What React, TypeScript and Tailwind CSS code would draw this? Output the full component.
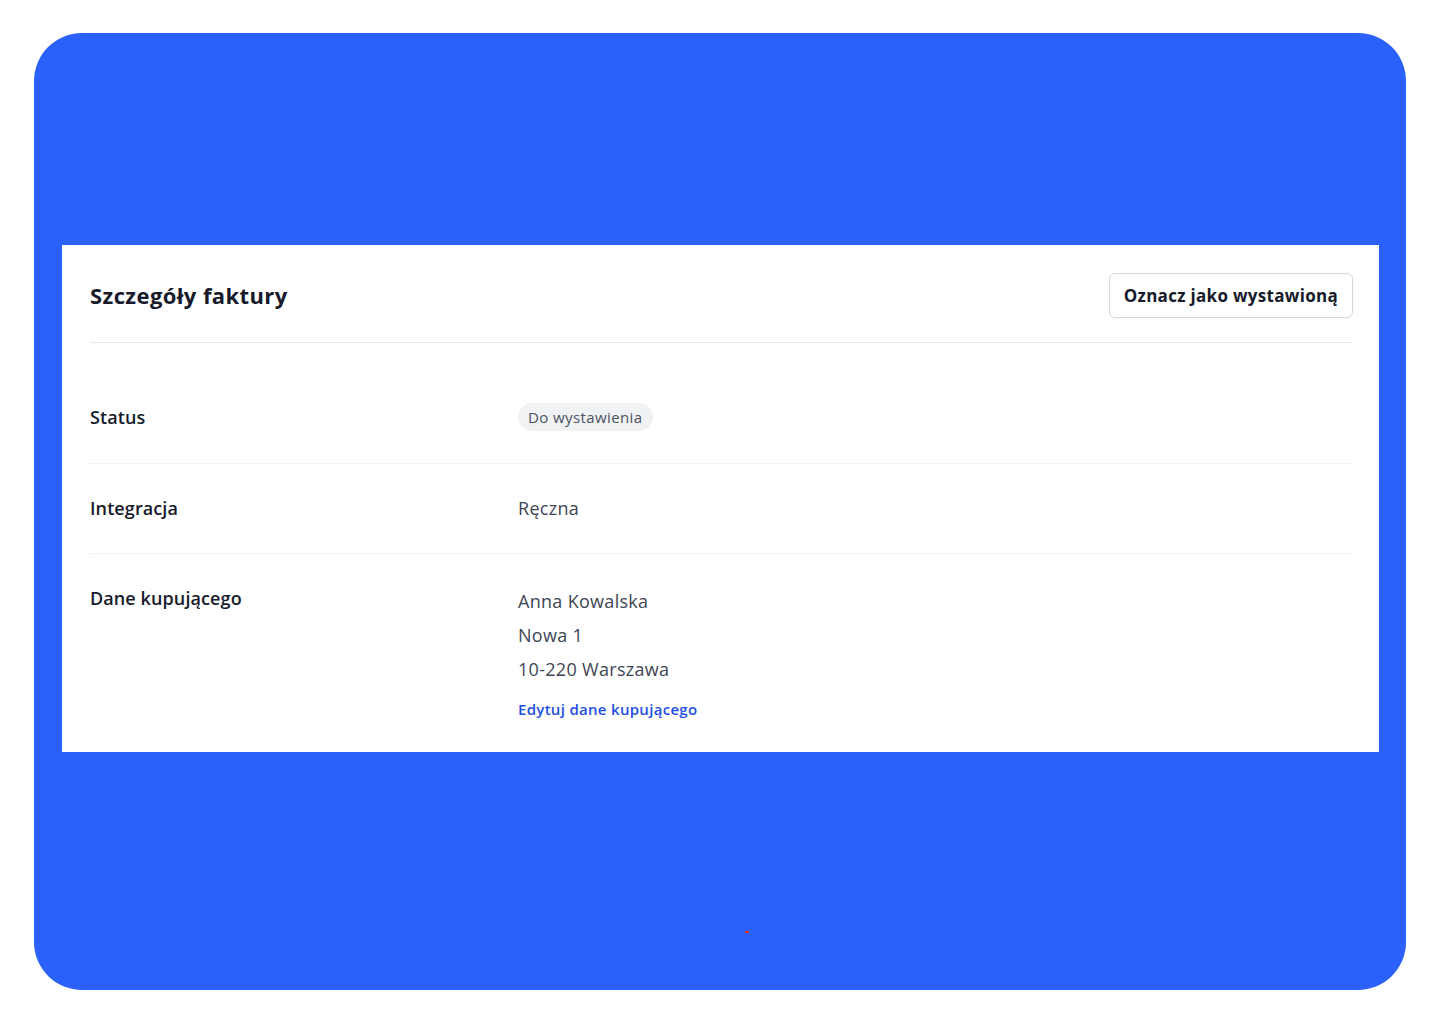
import React from 'react';

const rows = [
  { label: 'Status', kind: 'badge' },
  { label: 'Integracja', kind: 'text' },
  { label: 'Dane kupującego', kind: 'buyer' },
];

const App: React.FC = () => {
  return (
    <div className="w-[1440px] h-[1024px] bg-white pt-[33px] pl-[34px]" style={{ fontFamily: '"Open Sans", "Noto Sans", sans-serif' }}>
      <div className="relative w-[1372px] h-[957px] rounded-[48px] bg-[#2961FA] pt-[212px] pl-[28px]">
        {/* Invoice card */}
        <section className="w-[1317px] bg-white pl-[28px] pr-[26px]">
          <header className="flex items-center justify-between pt-[28px] pb-[24px] border-b border-[#E5E7EB]">
            <h1 className="text-[22px] font-bold tracking-[0.4px] text-[#161A2B]">Szczegóły faktury</h1>
            <button className="h-[45px] px-[14px] rounded-[6px] border border-[#D5D8DE] bg-white text-[17px] font-bold text-[#161A2B] tracking-[0.3px] shadow-[0_1px_2px_rgba(0,0,0,0.04)]">
              Oznacz jako wystawioną
            </button>
          </header>

          <div className="pt-[30px]">
            {rows.map((row, idx) => (
              <div
                key={row.label}
                className={`flex ${idx < rows.length - 1 ? 'border-b border-[#F0F1F3]' : ''} ${row.kind === 'buyer' ? 'pt-[30px] pb-[31px]' : idx === 1 ? 'pt-[30px] pb-[33px]' : 'pt-[30px] pb-[32px]'}`}
              >
                <div className="w-[428px] text-[18px] font-semibold tracking-[0.1px] text-[#161A2B] leading-[24px] pt-[2px]">{row.label}</div>
                {row.kind === 'badge' && (
                  <span className="inline-flex items-center h-[28px] px-[10px] rounded-full bg-[#F1F2F4] text-[15px] font-medium tracking-[0.4px] text-[#4A5161]">
                    Do wystawienia
                  </span>
                )}
                {row.kind === 'text' && (
                  <span className="text-[18px] tracking-[0.3px] text-[#3E4554] leading-[24px] pt-[2px]">Ręczna</span>
                )}
                {row.kind === 'buyer' && (
                  <div className="flex flex-col text-[18px] tracking-[0.3px] text-[#3E4554]">
                    <span className="leading-[34px] font-medium">Anna Kowalska</span>
                    <span className="leading-[34px]">Nowa 1</span>
                    <span className="leading-[34px]">10-220 Warszawa</span>
                    <a href="#" className="mt-[11px] text-[15px] font-semibold tracking-[0.3px] leading-[24px] text-[#1F4FE0]">
                      Edytuj dane kupującego
                    </a>
                  </div>
                )}
              </div>
            ))}
          </div>
        </section>

        <span className="absolute left-[711px] top-[898px] w-[4px] h-[2px] bg-[#FF2A1A]" />
      </div>
    </div>
  );
};

export default App;
